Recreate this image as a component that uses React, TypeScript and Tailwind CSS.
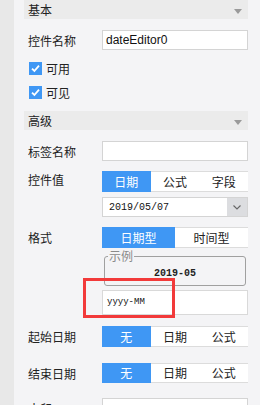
const cjk = "font-['Microsoft_YaHei','Noto_Sans_CJK_SC',sans-serif]";

function SectionHeader({ title }: { title: string }) {
  return (
    <div className="flex h-[19px] items-center justify-between bg-[#ebebeb] pl-[4px] pr-[6px]">
      <span className="text-[12px] leading-[19px] text-[#222]">{title}</span>
      <svg width="8" height="5" viewBox="0 0 8 5" className="mt-[3px]">
        <path d="M0 0H8L4 5Z" fill="#9a9a9a" />
      </svg>
    </div>
  );
}

function Label({ text }: { text: string }) {
  return <div className="w-[78px] shrink-0 pl-[4px] text-[12px] leading-[17px] text-[#222]">{text}</div>;
}

function Check({ text }: { text: string }) {
  return (
    <div className="flex h-[13px] items-center gap-[4px] pl-[5px]">
      <span className="flex h-[13px] w-[13px] items-center justify-center bg-[#3f97f4]">
        <svg width="9" height="9" viewBox="0 0 9 9">
          <path d="M1 4.6L3.4 7L8 1.6" stroke="#fff" strokeWidth="1.8" fill="none" />
        </svg>
      </span>
      <span className="text-[12px] leading-[17px] text-[#222]">{text}</span>
    </div>
  );
}

function Tabs({ items, active, h = 'h-[21px]' }: { items: string[]; active: number; h?: string }) {
  return (
    <div className={`flex w-[146px] ${h}`}>
      {items.map((t, i) => (
        <div
          key={t}
          className={
            i === active
              ? 'flex flex-1 items-center justify-center bg-[#3f97f4] text-[12px] text-white'
              : 'flex flex-1 items-center justify-center border-y border-[#dcdcdc] bg-white text-[12px] text-[#222]'
          }
        >
          {t}
        </div>
      ))}
    </div>
  );
}

export default function App() {
  return (
    <div className={`flex h-[405px] w-[260px] overflow-hidden ${cjk}`}>
      <div className="w-[14px] shrink-0 bg-[#e8e8e8]" />
      <div className="relative flex-1 bg-[#f4f4f6] pl-[10px] pr-[12px]">
        <SectionHeader title="基本" />

        <div className="mt-[11px] flex h-[20px] items-center">
          <Label text="控件名称" />
          <div className="flex h-[20px] w-[146px] items-center border border-[#d4d4d4] bg-white pl-[3px] font-['Liberation_Sans',Arial,sans-serif] text-[12px] text-[#111]">
            dateEditor0
          </div>
        </div>

        <div className="mt-[12px]">
          <Check text="可用" />
        </div>
        <div className="mt-[11px]">
          <Check text="可见" />
        </div>

        <div className="mt-[12px]">
          <SectionHeader title="高级" />
        </div>

        <div className="mt-[11px] flex h-[20px] items-center">
          <Label text="标签名称" />
          <div className="h-[20px] w-[146px] border border-[#d4d4d4] bg-white" />
        </div>

        <div className="mt-[10px] flex items-start">
          <Label text="控件值" />
          <Tabs items={['日期', '公式', '字段']} active={0} />
        </div>

        <div className="mt-[5px] flex">
          <div className="w-[78px] shrink-0" />
          <div className="flex h-[20px] w-[146px] border border-[#d4d4d4] bg-white">
            <div className="flex flex-1 items-center pl-[6px] font-['Liberation_Mono',monospace] text-[10px] text-[#111]">
              2019/05/07
            </div>
            <div className="flex w-[20px] items-center justify-center bg-[#dcdde0]">
              <svg width="8" height="5" viewBox="0 0 8 5">
                <path d="M0.5 0.5L4 4L7.5 0.5" stroke="#666" strokeWidth="1.1" fill="none" />
              </svg>
            </div>
          </div>
        </div>

        <div className="mt-[10px] flex items-center">
          <Label text="格式" />
          <Tabs items={['日期型', '时间型']} active={0} />
        </div>

        <div className="mt-[8px] flex">
          <div className="w-[80px] shrink-0" />
          <div className="relative h-[30px] w-[142px] rounded-[3px] border border-[#a0a0a0]">
            <span className="absolute left-[3px] top-[-9px] bg-[#f4f4f6] px-[1px] text-[12px] leading-[16px] text-[#8a8a8a]">
              示例
            </span>
            <div className="pt-[11px] text-center font-['Liberation_Mono',monospace] text-[10px] font-bold leading-[12px] text-[#222]">
              2019-05
            </div>
          </div>
        </div>

        <div className="mt-[4px] flex">
          <div className="w-[78px] shrink-0" />
          <div className="flex h-[25px] w-[146px] items-center border border-[#d9d9d9] bg-white pl-[4px] font-['Liberation_Mono',monospace] text-[9px] text-[#111]">
            yyyy-MM
          </div>
        </div>

        <div className="mt-[11px] flex items-center">
          <Label text="起始日期" />
          <Tabs items={['无', '日期', '公式']} active={0} />
        </div>

        <div className="mt-[16px] flex items-center">
          <Label text="结束日期" />
          <Tabs items={['无', '日期', '公式']} active={0} h="h-[20px]" />
        </div>

        <div className="mt-[15px] flex items-center">
          <Label text="水印" />
          <div className="h-[20px] w-[146px] border border-[#d4d4d4] bg-white" />
        </div>

        <div className="pointer-events-none absolute left-[69px] top-[278px] h-[40px] w-[92px] border-[3px] border-[#f23a3a]" />
      </div>
    </div>
  );
}
